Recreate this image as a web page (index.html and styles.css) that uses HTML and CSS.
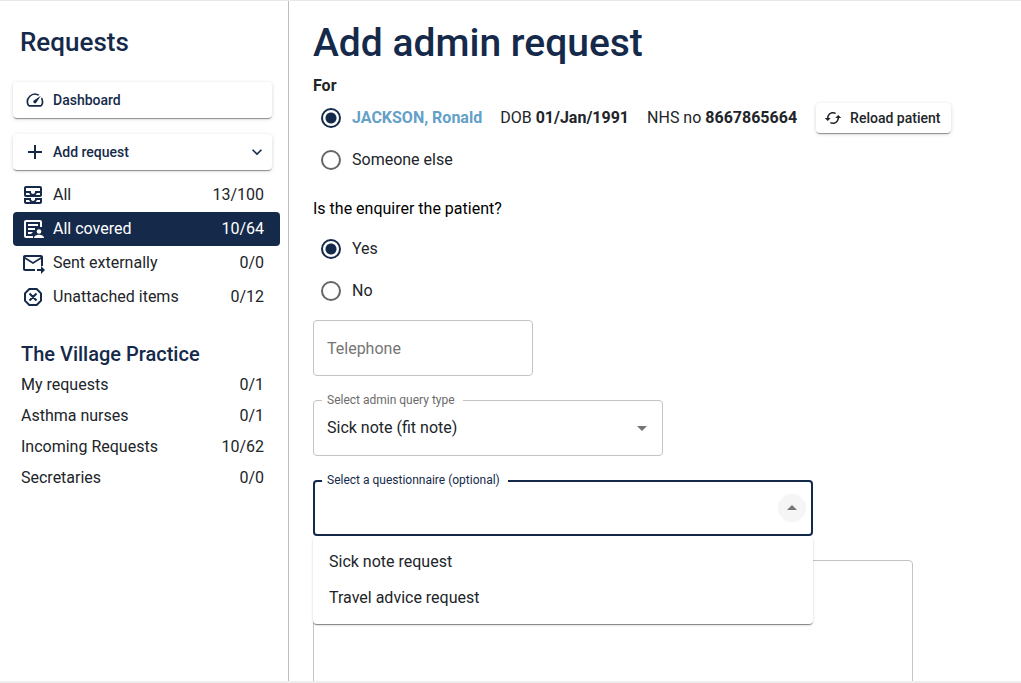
FILE: index.html
```html
<!DOCTYPE html>
<html lang="en">
<head>
<meta charset="utf-8">
<meta name="viewport" content="width=device-width, initial-scale=1">
<title>Add admin request</title>
<link rel="stylesheet" href="styles.css">
</head>
<body>
<div class="shell">
  <nav class="sidebar" aria-label="Requests">
    <h2 class="sidebar-title">Requests</h2>
    <div class="actions">
      <button type="button" class="btn btn-wide">
        <svg class="icon icon-sm" viewBox="0 0 24 24" aria-hidden="true"><path d="m20.38 8.57-1.23 1.85a8 8 0 0 1-.22 7.58H5.07A8 8 0 0 1 15.58 6.85l1.85-1.23A10 10 0 0 0 3.35 19a2 2 0 0 0 1.72 1h13.85a2 2 0 0 0 1.74-1 10 10 0 0 0-.27-10.44zm-9.79 6.84a2 2 0 0 0 2.83 0l5.66-8.49-8.49 5.66a2 2 0 0 0 0 2.83"/></svg>
        <span>Dashboard</span>
      </button>
      <button type="button" class="btn btn-wide" aria-haspopup="true">
        <svg class="icon icon-sm" viewBox="2 2 20 20" aria-hidden="true"><path d="M19 13h-6v6h-2v-6H5v-2h6V5h2v6h6z"/></svg>
        <span>Add request</span>
        <svg class="icon icon-sm push" viewBox="0 0 24 24" aria-hidden="true"><path d="M7.41 8.59 12 13.17l4.59-4.58L18 10l-6 6-6-6z"/></svg>
      </button>
    </div>
    <ul class="nav-list">
      <li><a href="#all" class="nav-item">
        <svg class="icon" viewBox="0 0 24 24" aria-hidden="true"><path d="M19 3H5c-1.1 0-2 .9-2 2v7c0 1.1.9 2 2 2h14c1.1 0 2-.9 2-2V5c0-1.1-.9-2-2-2zM5 10h3.13c.21.78.67 1.47 1.27 2H5v-2zm14 2h-4.4c.6-.53 1.06-1.22 1.27-2H19v2zm0-4h-5v1c0 1.07-.93 2-2 2s-2-.93-2-2V8H5V5h14v3zm-5 7v1c0 .47-.19.9-.48 1.25-.37.45-.92.75-1.52.75s-1.15-.3-1.52-.75c-.29-.35-.48-.78-.48-1.25v-1H3v4c0 1.1.9 2 2 2h14c1.1 0 2-.9 2-2v-4h-7zm-9 2h3.13c.02.09.06.17.09.25.24.68.65 1.28 1.18 1.75H5v-2zm14 2h-4.4c.54-.47.95-1.07 1.18-1.75.03-.08.07-.16.09-.25H19v2z"/></svg>
        <span>All</span><span class="count">13/100</span></a></li>
      <li><a href="#covered" class="nav-item is-active" aria-current="page">
        <svg class="icon" viewBox="0 0 24 24" aria-hidden="true"><path d="M5 5h14v5h2V5c0-1.100-.9-2-2-2H5c-1.100 0-2 .9-2 2v14c0 1.100.9 2 2 2h7v-2H5z"/><path d="M7 7h10v2H7zM7 11h7v2H7zM7 15h5l-2 2H7z"/><circle cx="18" cy="14.500" r="2.300"/><path d="M13 21c0-2.400 2.600-3.300 5-3.300s5 .9 5 3.300H13z"/></svg>
        <span>All covered</span><span class="count">10/64</span></a></li>
      <li><a href="#sent" class="nav-item">
        <svg class="icon" viewBox="0 0 24 24" aria-hidden="true"><path fill-rule="evenodd" d="M4 4h16c1.100 0 2 .9 2 2v9h-2V8l-8 5-8-5v10h10v2H4c-1.100 0-2-.9-2-2V6c0-1.100.9-2 2-2zm0 2 8 5 8-5z"/><path d="M16 18h4v-3l4 4-4 4v-3h-4z"/></svg>
        <span>Sent externally</span><span class="count">0/0</span></a></li>
      <li><a href="#unattached" class="nav-item">
        <svg class="icon icon-line" viewBox="0 0 24 24" aria-hidden="true"><path d="M8.300 4h7.400L20 8.300v7.400L15.700 20H8.300L4 15.700V8.300zM8.500 8.500l7 7M15.500 8.500l-7 7"/></svg>
        <span>Unattached items</span><span class="count">0/12</span></a></li>
    </ul>
    <h3 class="practice-title">The Village Practice</h3>
    <ul class="nav-list">
      <li><a href="#my" class="practice-item"><span>My requests</span><span class="count">0/1</span></a></li>
      <li><a href="#asthma" class="practice-item"><span>Asthma nurses</span><span class="count">0/1</span></a></li>
      <li><a href="#incoming" class="practice-item"><span>Incoming Requests</span><span class="count">10/62</span></a></li>
      <li><a href="#secretaries" class="practice-item"><span>Secretaries</span><span class="count">0/0</span></a></li>
    </ul>
  </nav>

  <main class="main">
    <h1 class="page-title">Add admin request</h1>
    <form class="form">
      <div class="group" role="radiogroup" aria-labelledby="for-label">
        <div class="group-label strong" id="for-label">For</div>
        <div class="radio-row">
          <input class="radio" type="radio" name="for" id="for-patient" checked>
          <label class="patient" for="for-patient">
            <a class="patient-link" href="#patient">JACKSON, Ronald</a>
            <span>DOB <b>01/Jan/1991</b></span>
            <span>NHS no <b>8667865664</b></span>
          </label>
          <button type="button" class="btn btn-reload">
            <svg class="icon icon-xs" viewBox="0 0 24 24" aria-hidden="true"><path d="m19 8-4 4h3c0 3.310-2.690 6-6 6-1.010 0-1.970-.25-2.800-.7l-1.460 1.460C8.970 19.540 10.430 20 12 20c4.420 0 8-3.580 8-8h3zM6 12c0-3.310 2.690-6 6-6 1.010 0 1.970.25 2.800.7l1.460-1.460C15.030 4.460 13.570 4 12 4c-4.420 0-8 3.580-8 8H1l4 4 4-4z"/></svg>
            <span>Reload patient</span>
          </button>
        </div>
        <div class="radio-row">
          <input class="radio" type="radio" name="for" id="for-other">
          <label for="for-other">Someone else</label>
        </div>
      </div>
      <div class="group group-enquirer" role="radiogroup" aria-labelledby="enquirer-label">
        <div class="group-label question" id="enquirer-label">Is the enquirer the patient?</div>
        <div class="radio-row">
          <input class="radio" type="radio" name="enquirer" id="enq-yes" checked>
          <label for="enq-yes">Yes</label>
        </div>
        <div class="radio-row">
          <input class="radio" type="radio" name="enquirer" id="enq-no">
          <label for="enq-no">No</label>
        </div>
      </div>
      <div class="fields">
        <input class="control phone" type="tel" placeholder="Telephone" aria-label="Telephone">
        <div class="field field-type">
          <label class="field-label" for="query-type">Select admin query type</label>
          <select class="control" id="query-type"><option>Sick note (fit note)</option></select>
          <svg class="icon caret" viewBox="0 0 24 24" aria-hidden="true"><path d="m7 10 5 5 5-5z"/></svg>
        </div>
        <div class="field field-questionnaire">
          <label class="field-label" for="questionnaire">Select a questionnaire (optional)</label>
          <input class="control is-focused" id="questionnaire" type="text" role="combobox" aria-expanded="true" aria-controls="questionnaire-menu">
          <button type="button" class="toggle" aria-label="Close">
            <svg class="icon" viewBox="0 0 24 24" aria-hidden="true"><path d="m7 14 5-5 5 5z"/></svg>
          </button>
          <ul class="menu" id="questionnaire-menu" role="listbox">
            <li class="menu-item" role="option">Sick note request</li>
            <li class="menu-item" role="option">Travel advice request</li>
          </ul>
        </div>
        <textarea class="control details" rows="8" aria-label="Request details"></textarea>
      </div>
    </form>
  </main>
</div>
</body>
</html>
```
FILE: styles.css
```css
:root {
  --navy: #152a4a;
  --text: #212529;
  --muted: #6b6b6b;
  --line: #c4c4c4;
}

* { box-sizing: border-box; }

body {
  margin: 0;
  font-family: Roboto, "Liberation Sans", sans-serif;
  font-size: 16px;
  line-height: 24px;
  color: var(--text);
  background: #fff;
}

h1, h2, h3, ul { margin: 0; padding: 0; }
ul { list-style: none; }
a { color: inherit; text-decoration: none; }
button, input, select, textarea { font: inherit; color: inherit; }

.shell {
  display: flex;
  height: 100vh;
  overflow: hidden;
  border-top: 1px solid #e8e8e8;
  border-bottom: 2px solid #eee;
}

/* Sidebar */
.sidebar {
  flex: 0 0 289px;
  padding: 25px 8px 0 13px;
  border-right: 1px solid #bdbdbd;
}
.sidebar-title {
  padding-left: 7px;
  font-size: 26px;
  line-height: 33px;
  font-weight: 500;
  color: var(--navy);
}
.actions {
  display: flex;
  flex-direction: column;
  gap: 16px;
  padding: 23px 8px 8px 0;
}
.btn {
  display: flex;
  align-items: center;
  border: 0;
  border-radius: 4px;
  background: #fff;
  font-weight: 500;
  cursor: pointer;
  box-shadow: 0 2px 1px -1px rgba(0, 0, 0, .3), 0 1px 1px rgba(0, 0, 0, .14), 0 1px 4px rgba(0, 0, 0, .14);
}
.btn-wide {
  gap: 8px;
  height: 36px;
  padding: 0 5px 0 12px;
  font-size: 14px;
  color: var(--navy);
}
.icon { flex: none; width: 24px; height: 24px; fill: currentColor; }
.icon-sm { width: 20px; height: 20px; }
.icon-xs { width: 18px; height: 18px; }
.icon-line { fill: none; stroke: currentColor; stroke-width: 2; }
.push { margin-left: auto; }

.nav-item, .practice-item { display: flex; align-items: center; }
.nav-item {
  gap: 8px;
  height: 34px;
  padding: 0 16px 0 8px;
  border-radius: 4px;
}
.nav-item .icon { color: var(--navy); }
.nav-item.is-active, .nav-item.is-active .icon { color: #fff; }
.nav-item.is-active { background: var(--navy); }
.count { margin-left: auto; }
.practice-title {
  padding: 28px 8px 2px;
  font-size: 20px;
  line-height: 25px;
  font-weight: 500;
  color: var(--navy);
}
.practice-item { height: 31px; padding: 0 16px 0 8px; }

/* Main column */
.main {
  flex: 1;
  min-width: 0;
  padding: 18px 24px 0;
  overflow: hidden;
}
.page-title {
  font-size: 39px;
  line-height: 48px;
  font-weight: 500;
  color: var(--navy);
}
.form { padding-top: 7px; }
.group-enquirer { padding: 16px 0 8px; }
.strong { line-height: 23px; font-weight: 700; }
.question { padding-bottom: 7px; color: #000; }
.radio-row {
  display: flex;
  align-items: center;
  gap: 11px;
  height: 42px;
  padding-left: 8px;
}
.radio {
  flex: none;
  width: 20px;
  height: 20px;
  margin: 0;
  appearance: none;
  border: 2px solid #666;
  border-radius: 50%;
}
.radio:checked {
  border-color: var(--navy);
  background: radial-gradient(circle, var(--navy) 5px, transparent 6px);
}
.patient { display: flex; gap: 18px; white-space: nowrap; }
.patient-link { font-weight: 700; color: #64a0c8; }
.btn-reload {
  gap: 8px;
  height: 30px;
  margin-left: 8px;
  padding: 0 11px 0 8px;
  font-size: 14px;
  white-space: nowrap;
}

/* Outlined fields */
.fields {
  display: flex;
  flex-direction: column;
  align-items: flex-start;
  gap: 24px;
}
.field { position: relative; max-width: 100%; }
.field-type { width: 350px; }
.field-questionnaire { width: 500px; }
.control {
  display: block;
  width: 100%;
  height: 56px;
  padding: 0 13px;
  border: 1px solid var(--line);
  border-radius: 4px;
  outline: 0;
  background: #fff;
  appearance: none;
}
.control::placeholder { color: #757575; opacity: 1; }
.control.is-focused { border: 2px solid var(--navy); }
.phone { width: 220px; }
.details { width: 600px; max-width: 100%; height: auto; padding: 16px 13px; resize: none; }
.field-label {
  position: absolute;
  top: -8px;
  left: 9px;
  padding: 0 8px 0 5px;
  font-size: 12px;
  line-height: 16px;
  color: var(--muted);
  background: #fff;
}
.field-questionnaire .field-label { color: var(--navy); }
.caret {
  position: absolute;
  top: 16px;
  right: 9px;
  color: #757575;
  pointer-events: none;
}
.toggle {
  position: absolute;
  top: 14px;
  right: 7px;
  width: 28px;
  height: 28px;
  padding: 2px;
  border: 0;
  border-radius: 50%;
  background: #f5f5f5;
  color: #757575;
}
.toggle .icon { display: block; }
.menu {
  position: absolute;
  top: 100%;
  left: 0;
  z-index: 1;
  width: 100%;
  padding: 8px 0;
  border-radius: 4px;
  background: #fff;
  box-shadow: 0 2px 1px -1px rgba(0, 0, 0, .3), 0 1px 1px rgba(0, 0, 0, .2), 0 1px 3px rgba(0, 0, 0, .12);
}
.menu-item { padding: 6px 16px; }
```
